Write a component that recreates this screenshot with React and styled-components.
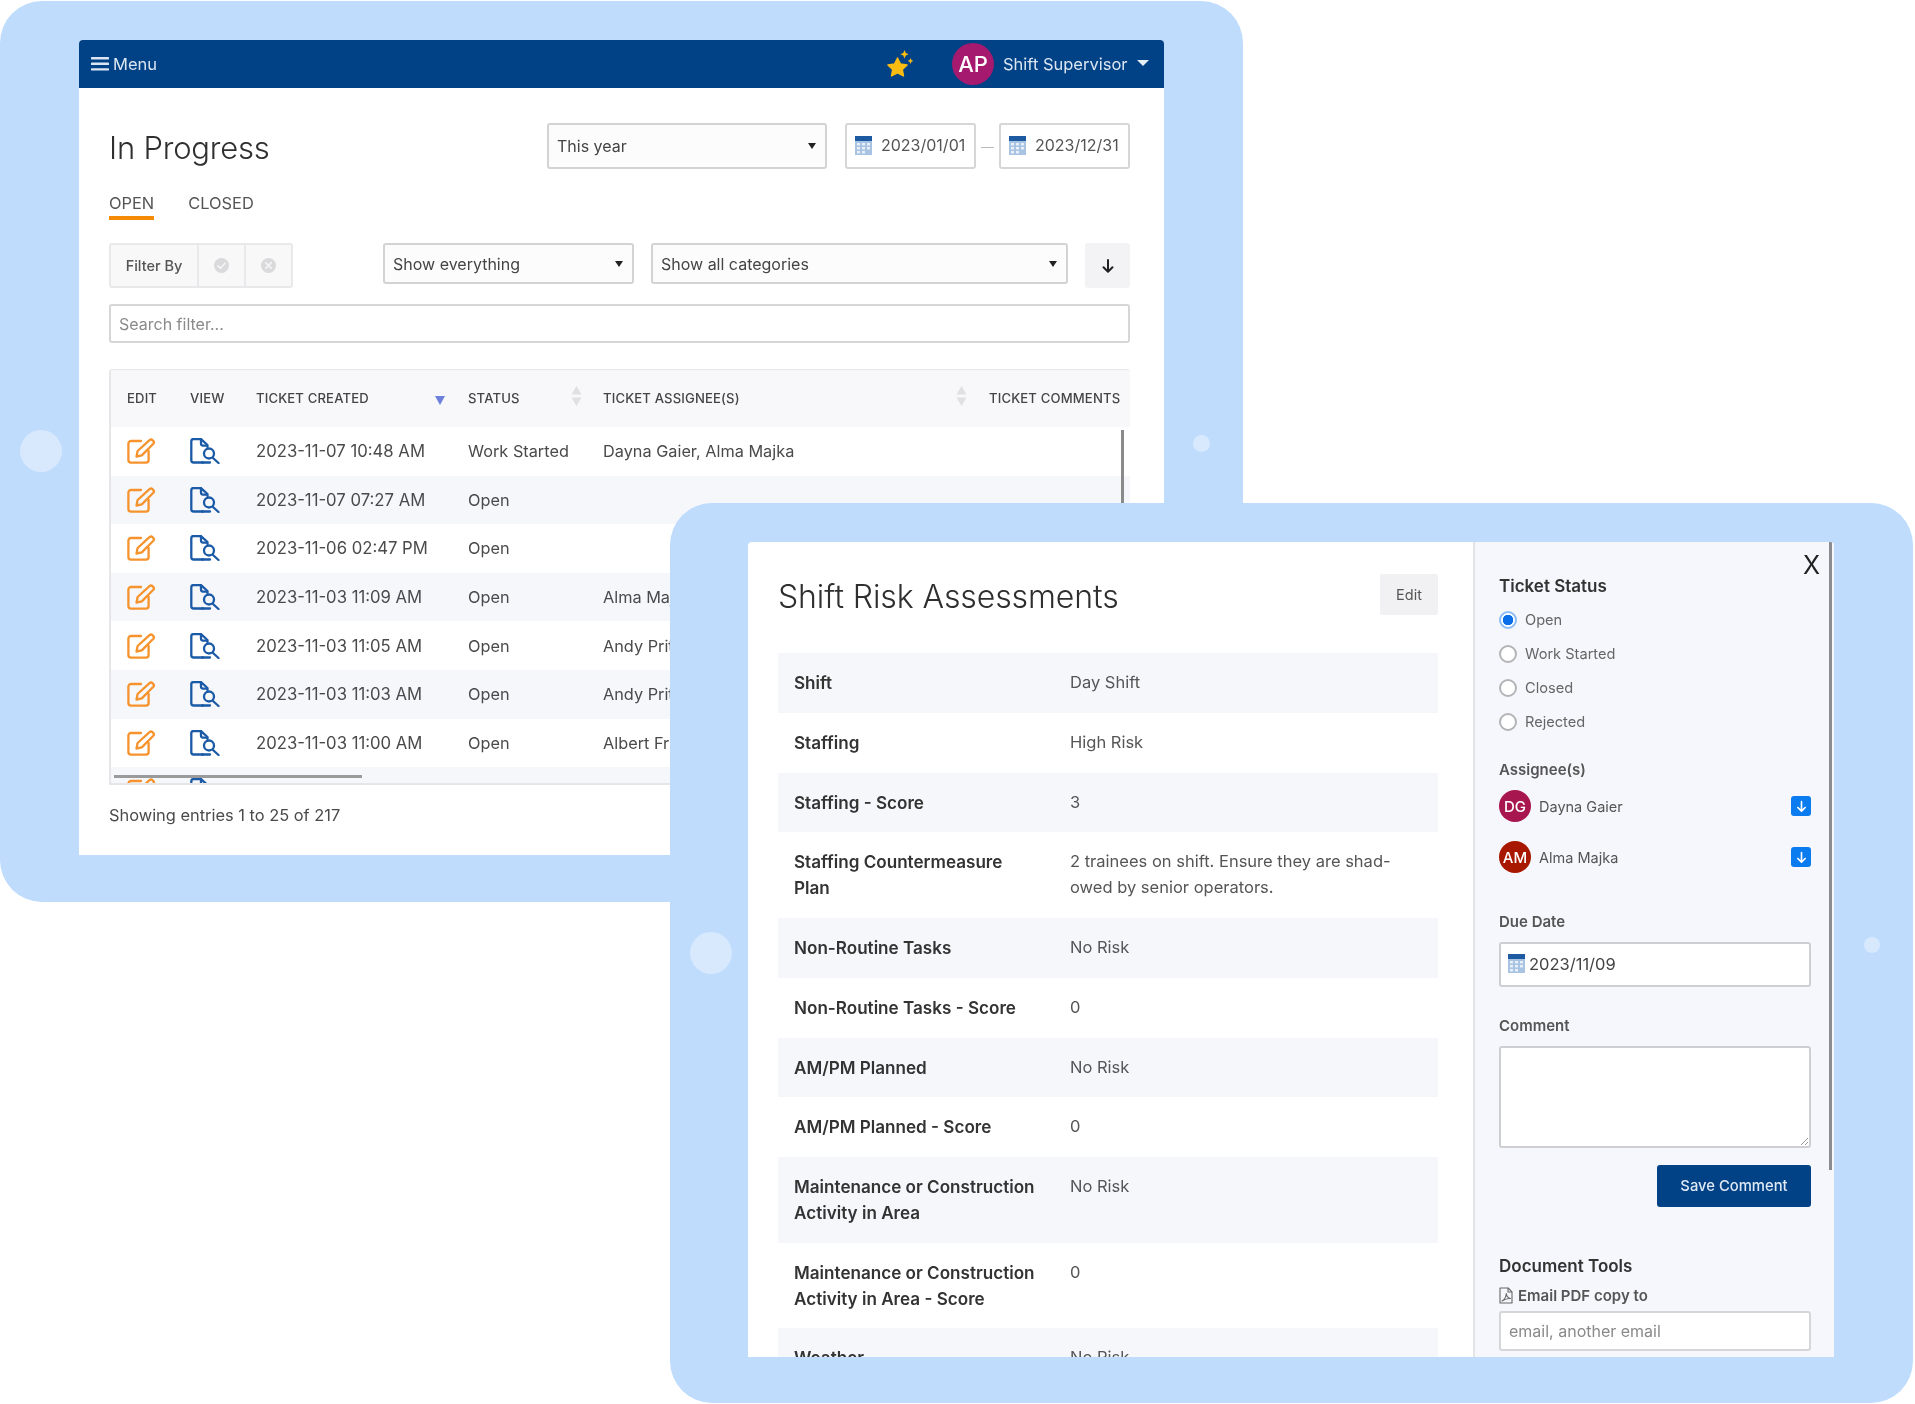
import React from "react";
import styled, { createGlobalStyle } from "styled-components";

const Global = createGlobalStyle`
  html, body { margin: 0; padding: 0; background: #fff; overflow: hidden; }
  * { box-sizing: border-box; }
  body { font-family: Inter, "Noto Sans", "Liberation Sans", sans-serif; color: #444; }
`;

const Canvas = styled.div`
  position: relative;
  width: 1915px;
  height: 1404px;
  overflow: hidden;
  background: #fff;
  filter: blur(0.45px);
`;

const Tablet = styled.section`
  position: absolute;
  left: ${(p) => p.$left}px;
  top: ${(p) => p.$top}px;
  width: ${(p) => p.$width}px;
  height: ${(p) => p.$height}px;
  padding: 39px ${(p) => p.$padRight}px 0 ${(p) => p.$padLeft}px;
  background: #bfdcfd;
  border-radius: 42px;
`;

const Camera = styled.span`
  position: absolute;
  left: ${(p) => p.$left}px;
  top: ${(p) => p.$top}px;
  width: ${(p) => p.$size}px;
  height: ${(p) => p.$size}px;
  border-radius: 50%;
  background: #d8e9fe;
`;

const Screen = styled.div`
  position: relative;
  height: ${(p) => p.$height}px;
  background: #fff;
  overflow: hidden;
  border-radius: 4px 4px 0 0;
  display: ${(p) => (p.$row ? "flex" : "block")};
`;

/* ---- top bar ---- */
const TopBar = styled.header`
  height: 48px;
  background: #014186;
  color: #dbe6f2;
  display: flex;
  align-items: center;
  padding: 0 15px 0 12px;
  font-size: 16.5px;
`;
const MenuButton = styled.div`
  display: flex;
  align-items: center;
  gap: 4px;
  flex: 1;
`;
const Avatar = styled.span`
  display: flex;
  align-items: center;
  justify-content: center;
  flex: none;
  width: ${(p) => p.$size}px;
  height: ${(p) => p.$size}px;
  border-radius: 50%;
  background: ${(p) => p.$color};
  color: #fff;
  font-size: ${(p) => p.$font}px;
  font-weight: 500;
`;
const StarWrap = styled.span`
  display: flex;
  margin-right: 38px;
`;
const UserName = styled.span`
  margin-left: 9px;
  width: 134px;
`;
const TopCaret = styled.span`
  width: 0;
  height: 0;
  border-left: 6px solid transparent;
  border-right: 6px solid transparent;
  border-top: 6px solid #e8eef6;
  margin-top: -3px;
`;

/* ---- list page ---- */
const Content = styled.div`
  padding: 35px 34px 0 30px;
`;
const TitleRow = styled.div`
  display: flex;
  align-items: center;
  height: 46px;
`;
const PageTitle = styled.h1`
  margin: 0 auto 0 0;
  padding-top: 4px;
  font-size: 31px;
  line-height: 46px;
  font-weight: 350;
  color: #2f2f2f;
  letter-spacing: -0.2px;
`;
const SelectBox = styled.div`
  display: flex;
  align-items: center;
  justify-content: space-between;
  width: ${(p) => p.$width}px;
  height: ${(p) => p.$height}px;
  padding: 0 9px 0 8px;
  background: #fcfcfd;
  border: 2px solid #d3d3d6;
  border-radius: 3px;
  font-size: 16px;
  color: #444;
`;
const SelectCaret = styled.span`
  width: 0;
  height: 0;
  border-left: 4px solid transparent;
  border-right: 4px solid transparent;
  border-top: 6px solid #222;
`;
const DateBox = styled.div`
  display: flex;
  align-items: center;
  gap: 9px;
  height: 46px;
  width: 131px;
  padding: 0 0 2px 8px;
  background: #fff;
  border: 2px solid #d6d6d9;
  border-radius: 3px;
  font-size: 16px;
  color: #555;
`;
const DateDash = styled.span`
  width: 13px;
  height: 1px;
  margin: 2px 5px 0;
  background: #bbb;
`;
const Controls = styled.div`
  display: flex;
  align-items: center;
`;
const Spacer = styled.span`
  width: ${(p) => p.$width}px;
`;
const Tabs = styled.nav`
  display: flex;
  gap: 34px;
  margin-top: 24px;
`;
const Tab = styled.span`
  height: 27px;
  line-height: 20px;
  font-size: 16.4px;
  color: #555;
  border-bottom: ${(p) => (p.$active ? "4px solid #f58a07" : "none")};
`;
const FilterRow = styled.div`
  display: flex;
  align-items: flex-start;
  margin-top: 23px;
  height: 45px;
`;
const FilterGroup = styled.div`
  display: flex;
  width: 184px;
  height: 45px;
  margin-right: 90px;
  background: #f8f8f9;
  border: 2px solid #e9e9eb;
  border-radius: 3px;
  font-size: 14.5px;
  font-weight: 500;
  color: #555;
`;
const FilterCell = styled.span`
  display: flex;
  align-items: center;
  justify-content: center;
  width: ${(p) => p.$width}px;
  border-left: ${(p) => (p.$first ? "none" : "2px solid #e9e9eb")};
`;
const ArrowButton = styled.span`
  display: flex;
  align-items: center;
  justify-content: center;
  width: 45px;
  height: 45px;
  margin-left: 17px;
  background: #f3f3f5;
  border-radius: 3px;
`;
const SelectGap = styled.span`
  width: 17px;
`;
const TextField = styled.div`
  display: flex;
  align-items: center;
  height: ${(p) => p.$height}px;
  margin-top: ${(p) => p.$mt}px;
  padding: 0 8px;
  background: #fff;
  border: 2px solid #d6d6d9;
  border-radius: 3px;
  font-size: 16px;
  color: #8a8a8a;
`;

/* ---- data table ---- */
const Table = styled.div`
  position: relative;
  height: 416px;
  margin-top: 26px;
  overflow: hidden;
  border: 2px solid #e6e6e8;
  border-top-width: 1px;
  border-right: none;
  border-radius: 3px 3px 0 0;
`;
const HeadRow = styled.div`
  display: grid;
  grid-template-columns: 63px 66px 212px 135px 386px 1fr;
  align-items: center;
  height: 57px;
  padding: 0 0 2px 16px;
  background: #f8f8fa;
  font-size: 13.1px;
  font-weight: 500;
  color: #444;
`;
const HeadCell = styled.span`
  position: relative;
  white-space: nowrap;
  letter-spacing: 0.15px;
`;
const SortIcon = styled.svg`
  position: absolute;
  top: ${(p) => p.$top}px;
  left: ${(p) => p.$left}px;
`;
const Row = styled.div`
  display: grid;
  grid-template-columns: 63px 66px 212px 135px 386px 1fr;
  align-items: center;
  height: 48.6px;
  padding-left: 16px;
  background: ${(p) => (p.$alt ? "#f5f7fb" : "#fff")};
  font-size: 16.3px;
  color: #4a4a4a;
  white-space: nowrap;
`;
const Stamp = styled.span`
  font-size: 16.7px;
`;
const CellIcon = styled.span`
  display: flex;
`;
const VScroll = styled.span`
  position: absolute;
  right: 6px;
  top: 60px;
  width: 3px;
  height: 300px;
  background: #8a8a8a;
`;
const HScroll = styled.span`
  position: absolute;
  left: 3px;
  bottom: 5px;
  width: 248px;
  height: 3px;
  background: #9a9a9a;
`;
const Summary = styled.div`
  margin-top: 20px;
  font-size: 16.4px;
  line-height: 20px;
  color: #4a4a4a;
`;

/* ---- detail page ---- */
const DetailMain = styled.div`
  width: 725px;
  padding: 32px 35px 0 30px;
  flex: none;
`;
const DetailHead = styled.div`
  display: flex;
  align-items: center;
  justify-content: space-between;
  height: 41px;
  margin-bottom: 38px;
`;
const DetailTitle = styled.h2`
  margin: 0;
  padding-top: 4px;
  font-size: 32px;
  font-weight: 350;
  color: #2f2f2f;
  letter-spacing: -0.1px;
`;
const EditButton = styled.span`
  display: flex;
  align-items: center;
  justify-content: center;
  width: 58px;
  height: 41px;
  background: #f1f1f3;
  border-radius: 2px;
  font-size: 14.5px;
  color: #555;
`;
const InfoRow = styled.div`
  display: grid;
  grid-template-columns: 276px 1fr;
  padding: 17px 40px 17px 16px;
  line-height: 25.8px;
  font-size: 16.5px;
  background: ${(p) => (p.$alt ? "#f6f7fb" : "#fff")};
`;
const InfoLabel = styled.span`
  font-size: 17.1px;
  font-weight: 600;
  color: #333;
  padding-right: 32px;
`;
const InfoValue = styled.span`
  color: #555;
`;

const Sidebar = styled.aside`
  position: relative;
  width: 361px;
  flex: none;
  padding: 34px 23px 0 24px;
  background: #f6f7fc;
  border-left: 2px solid #e4e4e8;
`;
const CloseX = styled.span`
  position: absolute;
  right: 14px;
  top: 8px;
  font-size: 25px;
  line-height: 30px;
  color: #222;
`;
const SideScroll = styled.span`
  position: absolute;
  right: 2px;
  top: 0;
  width: 3px;
  height: 628px;
  background: #8a8a90;
`;
const SectionTitle = styled.div`
  margin-top: ${(p) => p.$mt || 0}px;
  font-size: 17px;
  line-height: 20px;
  font-weight: 600;
  color: #333;
`;
const FieldLabel = styled.div`
  margin-top: ${(p) => p.$mt}px;
  font-size: 15px;
  line-height: 20px;
  font-weight: 600;
  color: #555;
`;
const RadioList = styled.div`
  margin-top: 7px;
`;
const RadioRow = styled.div`
  display: flex;
  align-items: center;
  gap: 8px;
  height: 34px;
  font-size: 14.6px;
  color: #666;
`;
const RadioDot = styled.span`
  width: 18px;
  height: 18px;
  border-radius: 50%;
  border: ${(p) => (p.$on ? "2px solid #8bbdf8" : "2px solid #b4b4b8")};
  background: ${(p) => (p.$on ? "radial-gradient(circle, #0a6fe8 0 5px, #fff 5.5px)" : "#fff")};
`;
const RadioGap = styled.div`
  height: 21px;
`;
const Assignee = styled.div`
  display: flex;
  align-items: center;
  margin-top: ${(p) => p.$mt}px;
  font-size: 14.5px;
  color: #555;
  gap: 8px;
`;
const AssigneeName = styled.span`
  flex: 1;
`;
const BlueButton = styled.span`
  display: flex;
  align-items: center;
  justify-content: center;
  width: 20px;
  height: 20px;
  border-radius: 3px;
  background: #0b7bf0;
`;
const DateField = styled.div`
  display: flex;
  align-items: center;
  gap: 4px;
  height: 45px;
  margin-top: 10px;
  padding: 0 0 2px 7px;
  background: #fff;
  border: 2px solid #cfcfd3;
  border-radius: 3px;
  font-size: 16.5px;
  color: #444;
`;
const CommentBox = styled.div`
  position: relative;
  height: 102px;
  margin-top: 10px;
  background: #fff;
  border: 2px solid #cfcfd3;
  border-radius: 3px;
`;
const Grip = styled.svg`
  position: absolute;
  right: 1px;
  bottom: 1px;
`;
const SaveRow = styled.div`
  display: flex;
  justify-content: flex-end;
  margin-top: 17px;
`;
const SaveButton = styled.span`
  display: flex;
  align-items: center;
  justify-content: center;
  width: 154px;
  height: 42px;
  background: #014186;
  border-radius: 3px;
  color: #dfe9f4;
  font-size: 14.8px;
  font-weight: 500;
`;
const EmailLabel = styled.div`
  display: flex;
  align-items: center;
  gap: 5px;
  margin-top: 10px;
  height: 18px;
  font-size: 15px;
  font-weight: 600;
  color: #555;
`;

/* ---- drawings ---- */
const EditIcon = () => (
  <svg width="29" height="26" viewBox="0 0 29 26" fill="none" stroke="#f6932c" strokeWidth="2.3" strokeLinejoin="round" strokeLinecap="round">
    <path d="M14 3H4a2.6 2.6 0 0 0-2.6 2.6V22a2.6 2.6 0 0 0 2.6 2.6h15a2.6 2.6 0 0 0 2.6-2.6V13" />
    <path d="M9.500 18.500 10.600 13 22.500 2.200a2.200 2.200 0 0 1 3.100 0l.6.7a2.200 2.200 0 0 1-.1 3.100L14.800 17.400Z" />
  </svg>
);
const ViewIcon = () => (
  <svg width="30" height="26" viewBox="0 0 30 26" fill="none" stroke="#1a5aa6" strokeWidth="2.3" strokeLinejoin="round" strokeLinecap="round">
    <path d="M13 24.500H3.600a2.300 2.300 0 0 1-2.300-2.300V3.400a2.300 2.300 0 0 1 2.300-2.300H11L17.500 7v2" />
    <path d="M11 1.500V5.600A2 2 0 0 0 13 7.600H17" />
    <path d="M12 24.500H20" />
    <circle cx="19" cy="15.500" r="5" />
    <path d="M23 20 28.500 25" />
  </svg>
);
const Star = () => (
  <svg width="28" height="28" viewBox="0 0 28 28" fill="#fbbc12" stroke="#fbbc12" strokeLinejoin="round">
    <path strokeWidth="1.4" d="M11.500 8l3 6 6.600.9-4.800 4.600 1.200 6.500-6-3.200-6 3.200 1.200-6.500L1.900 14.900l6.600-.9z" />
    <path stroke="none" d="M18.500 0l1.300 2.900 2.900 1.300-2.900 1.300-1.300 3-1.300-3-2.900-1.300 2.900-1.300zM24.500 8l.9 2 2 .9-2 .9-.9 2.100-.9-2.100-2-.9 2-.9z" />
  </svg>
);
const Burger = () => (
  <svg width="18" height="14" viewBox="0 0 18 14" fill="#dbe6f2">
    <rect y="0" width="18" height="2.400" rx=".6" />
    <rect y="5.600" width="18" height="2.400" rx=".6" />
    <rect y="11.200" width="18" height="2.400" rx=".6" />
  </svg>
);
const Calendar = () => (
  <svg width="17" height="19" viewBox="0 0 17 19">
    <rect x="0" y="1" width="17" height="18" fill="#a9c3e2" />
    <rect x="0" y="0" width="17" height="5" fill="#1e5aa2" />
    <g fill="#fff" opacity=".75">
      <rect x="2" y="7" width="3" height="2.400" /><rect x="7" y="7" width="3" height="2.400" /><rect x="12" y="7" width="3" height="2.400" />
      <rect x="2" y="11" width="3" height="2.400" /><rect x="7" y="11" width="3" height="2.400" /><rect x="12" y="11" width="3" height="2.400" />
      <rect x="2" y="15" width="3" height="2.400" /><rect x="7" y="15" width="3" height="2.400" />
    </g>
  </svg>
);
const CircleGlyph = ({ cross }) => (
  <svg width="17" height="17" viewBox="0 0 17 17" fill="none">
    <circle cx="8.500" cy="8.500" r="7.500" fill="#dadadc" />
    <path stroke="#f4f4f5" strokeWidth="1.700" strokeLinecap="round" strokeLinejoin="round" d={cross ? "M5.800 5.800l5.400 5.400M11.200 5.800l-5.400 5.400" : "M5 8.800l2.500 2.500L12 6.300"} />
  </svg>
);
const DownArrow = ({ color, size }) => (
  <svg width={size} height={size} viewBox="0 0 16 16" fill="none" stroke={color} strokeWidth="2" strokeLinecap="round" strokeLinejoin="round">
    <path d="M8 2v11.500M3.500 9.200 8 13.700l4.500-4.500" />
  </svg>
);
const BothSort = ({ left }) => (
  <SortIcon $left={left} $top={-4} width="11" height="20" viewBox="0 0 11 20" fill="#e0e0e3">
    <path d="M5.500 0 10.500 8.500H.5zM5.500 20 .5 11.500h10z" />
  </SortIcon>
);
const PdfIcon = () => (
  <svg width="14" height="17" viewBox="0 0 14 17" fill="none" stroke="#666" strokeWidth="1.100" strokeLinejoin="round">
    <path d="M1 1h8.200L13 4.800V16H1z" />
    <path d="M9 1v4h4" />
    <path d="M3 14c2-1 4-4 4.300-7.500.3 2.500 2 4.500 4.200 5-2.500-.2-5.500.6-8.500 2.500z" />
  </svg>
);

/* ---- data ---- */
const tickets = [
  ["2023-11-07 10:48 AM", "Work Started", "Dayna Gaier, Alma Majka"],
  ["2023-11-07 07:27 AM", "Open", ""],
  ["2023-11-06 02:47 PM", "Open", ""],
  ["2023-11-03 11:09 AM", "Open", "Alma Majka"],
  ["2023-11-03 11:05 AM", "Open", "Andy Pritchard"],
  ["2023-11-03 11:03 AM", "Open", "Andy Pritchard"],
  ["2023-11-03 11:00 AM", "Open", "Albert Fry"],
  ["", "", ""],
];

const details = [
  ["Shift", "Day Shift"],
  ["Staffing", "High Risk"],
  ["Staffing - Score", "3"],
  ["Staffing Countermeasure Plan", "2 trainees on shift. Ensure they are shad-\u200Bowed by senior operators."],
  ["Non-Routine Tasks", "No Risk"],
  ["Non-Routine Tasks - Score", "0"],
  ["AM/PM Planned", "No Risk"],
  ["AM/PM Planned - Score", "0"],
  ["Maintenance or Construction Activity in Area", "No Risk"],
  ["Maintenance or Construction Activity in Area - Score", "0"],
  ["Weather", "No Risk"],
];

const statuses = ["Open", "Work Started", "Closed", "Rejected"];

export default function App() {
  return (
    <Canvas>
      <Global />

      <Tablet $left={0} $top={1} $width={1243} $height={901} $padLeft={79} $padRight={79}>
        <Camera $left={20} $top={429} $size={42} />
        <Camera $left={1193} $top={434} $size={17} />
        <Screen $height={815}>
          <TopBar>
            <MenuButton>
              <Burger />
              Menu
            </MenuButton>
            <StarWrap><Star /></StarWrap>
            <Avatar $size={42} $color="#a5196f" $font={22}>AP</Avatar>
            <UserName>Shift Supervisor</UserName>
            <TopCaret />
          </TopBar>
          <Content>
            <TitleRow>
              <PageTitle>In Progress</PageTitle>
              <Controls>
                <SelectBox $width={280} $height={46}>This year<SelectCaret /></SelectBox>
                <Spacer $width={18} />
                <DateBox><Calendar />2023/01/01</DateBox>
                <DateDash />
                <DateBox><Calendar />2023/12/31</DateBox>
              </Controls>
            </TitleRow>
            <Tabs>
              <Tab $active>OPEN</Tab>
              <Tab>CLOSED</Tab>
            </Tabs>
            <FilterRow>
              <FilterGroup>
                <FilterCell $first $width={86}>Filter By</FilterCell>
                <FilterCell $width={47}><CircleGlyph /></FilterCell>
                <FilterCell $width={47}><CircleGlyph cross /></FilterCell>
              </FilterGroup>
              <SelectBox $width={251} $height={41}>Show everything<SelectCaret /></SelectBox>
              <SelectGap />
              <SelectBox $width={417} $height={41}>Show all categories<SelectCaret /></SelectBox>
              <ArrowButton><DownArrow color="#222" size={16} /></ArrowButton>
            </FilterRow>
            <TextField $height={39} $mt={16}>Search filter...</TextField>
            <Table>
              <HeadRow>
                <HeadCell>EDIT</HeadCell>
                <HeadCell>VIEW</HeadCell>
                <HeadCell>
                  TICKET CREATED
                  <SortIcon $left={179} $top={6} width="10" height="9" viewBox="0 0 10 9" fill="#6c80dc"><path d="M0 0h10L5 9z" /></SortIcon>
                </HeadCell>
                <HeadCell>STATUS<BothSort left={103} /></HeadCell>
                <HeadCell>TICKET ASSIGNEE(S)<BothSort left={353} /></HeadCell>
                <HeadCell>TICKET COMMENTS</HeadCell>
              </HeadRow>
              {tickets.map((t, i) => (
                <Row key={i} $alt={i % 2 === 1}>
                  <CellIcon><EditIcon /></CellIcon>
                  <CellIcon><ViewIcon /></CellIcon>
                  <Stamp>{t[0]}</Stamp>
                  <span>{t[1]}</span>
                  <span>{t[2]}</span>
                  <span />
                </Row>
              ))}
              <VScroll />
              <HScroll />
            </Table>
            <Summary>Showing entries 1 to 25 of 217</Summary>
          </Content>
        </Screen>
      </Tablet>

      <Tablet $left={670} $top={503} $width={1243} $height={900} $padLeft={78} $padRight={79}>
        <Camera $left={20} $top={429} $size={42} />
        <Camera $left={1194} $top={434} $size={16} />
        <Screen $height={815} $row>
          <DetailMain>
            <DetailHead>
              <DetailTitle>Shift Risk Assessments</DetailTitle>
              <EditButton>Edit</EditButton>
            </DetailHead>
            {details.map((d, i) => (
              <InfoRow key={d[0]} $alt={i % 2 === 0}>
                <InfoLabel>{d[0]}</InfoLabel>
                <InfoValue>{d[1]}</InfoValue>
              </InfoRow>
            ))}
          </DetailMain>
          <Sidebar>
            <CloseX>X</CloseX>
            <SideScroll />
            <SectionTitle>Ticket Status</SectionTitle>
            <RadioList>
              {statuses.map((s, i) => (
                <RadioRow key={s}>
                  <RadioDot $on={i === 0} />
                  {s}
                </RadioRow>
              ))}
            </RadioList>
            <RadioGap />
            <FieldLabel $mt={0}>Assignee(s)</FieldLabel>
            <Assignee $mt={10}>
              <Avatar $size={32} $color="#a8164f" $font={15}>DG</Avatar>
              <AssigneeName>Dayna Gaier</AssigneeName>
              <BlueButton><DownArrow color="#fff" size={13} /></BlueButton>
            </Assignee>
            <Assignee $mt={19}>
              <Avatar $size={32} $color="#a81800" $font={15}>AM</Avatar>
              <AssigneeName>Alma Majka</AssigneeName>
              <BlueButton><DownArrow color="#fff" size={13} /></BlueButton>
            </Assignee>
            <FieldLabel $mt={39}>Due Date</FieldLabel>
            <DateField><Calendar />2023/11/09</DateField>
            <FieldLabel $mt={29}>Comment</FieldLabel>
            <CommentBox>
              <Grip width="8" height="8" viewBox="0 0 8 8" stroke="#999" strokeWidth="1"><path d="M1 8 8 1M5 8 8 5" /></Grip>
            </CommentBox>
            <SaveRow><SaveButton>Save Comment</SaveButton></SaveRow>
            <SectionTitle $mt={49}>Document Tools</SectionTitle>
            <EmailLabel><PdfIcon />Email PDF copy to</EmailLabel>
            <TextField $height={40} $mt={7}>email, another email</TextField>
          </Sidebar>
        </Screen>
      </Tablet>
    </Canvas>
  );
}
